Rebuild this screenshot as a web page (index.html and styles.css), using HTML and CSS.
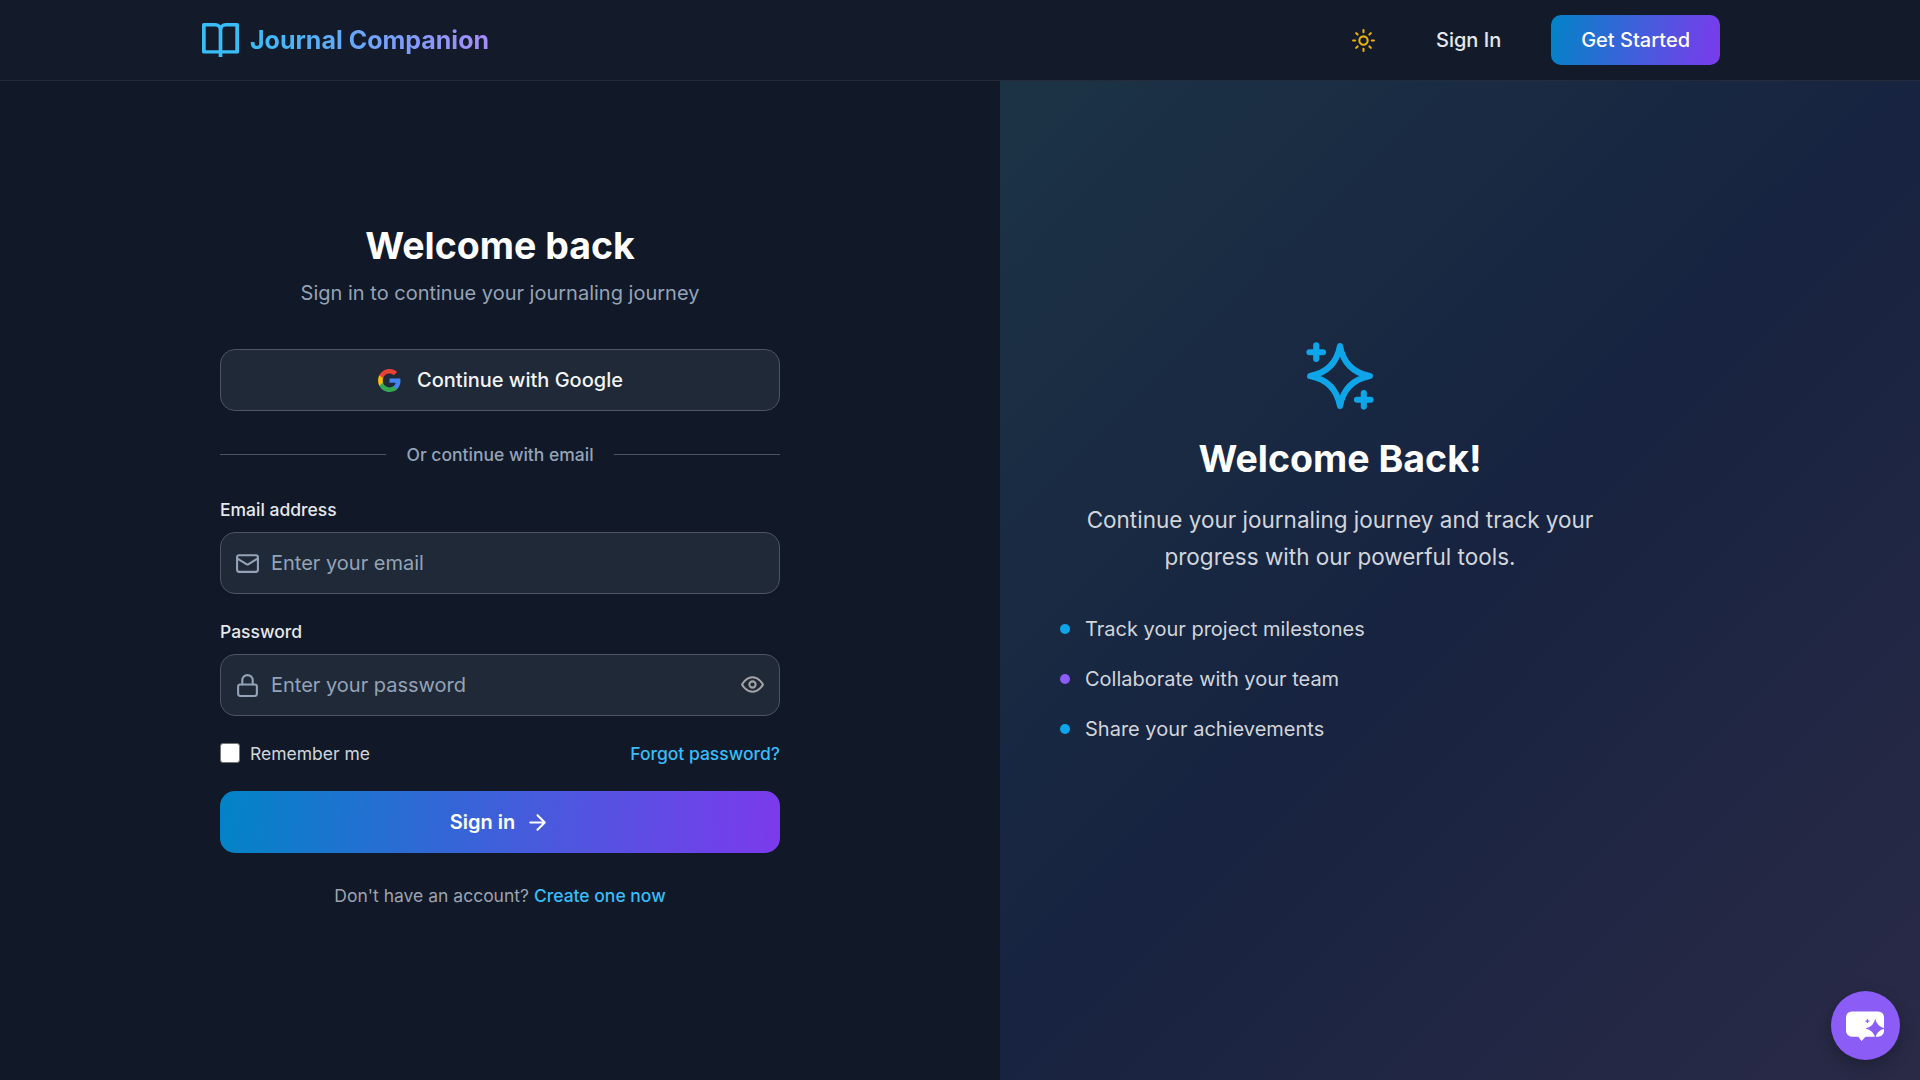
FILE: index.html
```html
<!DOCTYPE html>
<html lang="en">
<head>
    <meta charset="UTF-8">
    <meta name="viewport" content="width=device-width, initial-scale=1.0">
    <title>Sign In - Journal Companion</title>
    <link rel="stylesheet" href="styles.css">
</head>
<body>
    <header class="site-header">
        <div class="header-inner">
            <a class="brand" href="#">
                <svg class="brand-icon" viewBox="2 3 20 20" preserveAspectRatio="none" fill="#38bdf8"><path d="M13 21v2h-2v-2H3a1 1 0 0 1-1-1V4a1 1 0 0 1 1-1h6a3.99 3.99 0 0 1 3 1.354A3.99 3.99 0 0 1 15 3h6a1 1 0 0 1 1 1v16a1 1 0 0 1-1 1h-8zm7-2V5h-5a2 2 0 0 0-2 2v12h7zm-9 0V7a2 2 0 0 0-2-2H4v14h7z"/></svg>
                <span class="brand-name">Journal Companion</span>
            </a>
            <nav class="header-nav">
                <svg class="sun-icon" viewBox="0 0 24 24" fill="none" stroke="#eab308" stroke-width="2" stroke-linecap="round" stroke-linejoin="round"><circle cx="12" cy="12" r="4"/><path d="M12 2v2M12 20v2M4.93 4.93l1.41 1.41M17.66 17.66l1.41 1.41M2 12h2M20 12h2M6.34 17.66l-1.41 1.41M19.07 4.93l-1.41 1.41"/></svg>
                <a class="nav-link" href="#">Sign In</a>
                <a class="nav-cta" href="#">Get Started</a>
            </nav>
        </div>
    </header>

    <main class="auth-page">
        <section class="form-panel">
            <div class="form-box">
                <h1>Welcome back</h1>
                <p class="subheading">Sign in to continue your journaling journey</p>

                <button class="google-button" type="button">
                    <svg class="google-icon" viewBox="0 0 24 24">
                        <path fill="#4285F4" d="M22.56 12.25c0-.78-.07-1.53-.2-2.25H12v4.26h5.92c-.26 1.37-1.04 2.53-2.21 3.31v2.77h3.57c2.08-1.92 3.28-4.74 3.28-8.09z"/>
                        <path fill="#34A853" d="M12 23c2.97 0 5.46-.98 7.28-2.66l-3.57-2.77c-.98.66-2.23 1.06-3.71 1.06-2.86 0-5.29-1.93-6.16-4.53H2.18v2.84C3.99 20.53 7.7 23 12 23z"/>
                        <path fill="#FBBC05" d="M5.84 14.09c-.22-.66-.35-1.36-.35-2.09s.13-1.43.35-2.09V7.07H2.18C1.43 8.55 1 10.22 1 12s.43 3.45 1.18 4.93l2.85-2.22.81-.62z"/>
                        <path fill="#EA4335" d="M12 5.38c1.62 0 3.06.56 4.21 1.64l3.15-3.15C17.45 2.09 14.97 1 12 1 7.7 1 3.99 3.47 2.18 7.07l3.66 2.84c.87-2.6 3.3-4.53 6.16-4.53z"/>
                    </svg>
                    Continue with Google
                </button>

                <div class="divider"><span>Or continue with email</span></div>

                <form>
                    <label class="field-label" for="email">Email address</label>
                    <div class="input-wrap">
                        <svg class="field-icon" viewBox="0 0 24 24"><rect x="2" y="4" width="20" height="16" rx="2"/><path d="m22 7-8.97 5.7a1.94 1.94 0 0 1-2.06 0L2 7"/></svg>
                        <input id="email" type="email" placeholder="Enter your email">
                    </div>

                    <label class="field-label password-label" for="password">Password</label>
                    <div class="input-wrap">
                        <svg class="field-icon" viewBox="0 0 24 24"><rect x="3" y="11" width="18" height="11" rx="2"/><path d="M7 11V7a5 5 0 0 1 10 0v4"/></svg>
                        <input id="password" type="password" placeholder="Enter your password">
                        <svg class="field-icon eye-icon" viewBox="0 0 24 24"><path d="M2 12s3.5-7 10-7 10 7 10 7-3.5 7-10 7-10-7-10-7Z"/><circle cx="12" cy="12" r="3"/></svg>
                    </div>

                    <div class="form-options">
                        <label class="remember"><span class="checkbox"></span>Remember me</label>
                        <a class="link" href="#">Forgot password?</a>
                    </div>

                    <button class="submit-button" type="button">
                        Sign in
                        <svg class="arrow-icon" viewBox="0 0 24 24"><path d="M5 12h14M12 5l7 7-7 7"/></svg>
                    </button>
                </form>

                <p class="signup-note">Don't have an account? <a class="link" href="#">Create one now</a></p>
            </div>
        </section>

        <section class="promo-panel">
            <div class="promo-box">
                <svg class="sparkle-icon" viewBox="0 0 200 200" fill="none" stroke="#0ea5e9" stroke-width="18" stroke-linecap="round" stroke-linejoin="round">
                    <path d="M100 12Q114 86 188 100Q114 114 100 188Q86 114 12 100Q86 86 100 12Z"/>
                    <path d="M30 10v40M10 30h40M170 150v40M150 170h40"/>
                </svg>
                <h2>Welcome Back!</h2>
                <p class="promo-text">Continue your journaling journey and track your progress with our powerful tools.</p>
                <ul class="promo-list">
                    <li><span class="dot dot-blue"></span>Track your project milestones</li>
                    <li><span class="dot dot-purple"></span>Collaborate with your team</li>
                    <li><span class="dot dot-blue"></span>Share your achievements</li>
                </ul>
            </div>
        </section>
    </main>

    <!-- Floating assistant button -->
    <button class="chat-button" type="button" aria-label="Open assistant">
        <svg viewBox="0 0 40 32" width="39" height="32">
            <path fill="#fff" d="M6 1h27a6 6 0 0 1 6 6v14a6 6 0 0 1-6 6H20l-4 4.5-3.500-4.500H6a6 6 0 0 1-6-6V7a6 6 0 0 1 6-6z"/>
            <path fill="#8b5cf6" d="M30 8.500Q31.500 16.500 40 18.500Q31.500 20.500 30 28.500Q28.500 20.500 20 18.500Q28.500 16.500 30 8.500Z"/>
            <path stroke="#8b5cf6" stroke-width="1.300" d="M22 9v4M20 11h4"/>
        </svg>
    </button>
</body>
</html>
```

FILE: styles.css
```css
* {
    box-sizing: border-box;
}

html,
body {
    height: 100%;
}

body {
    margin: 0;
    overflow: hidden;
    background-color: #111827;
    color: #fff;
    font-family: 'Inter', 'Liberation Sans', sans-serif;
    font-size: 20px;
    line-height: 30px;
}

a {
    text-decoration: none;
}

/* Header */
.site-header {
    height: 81px;
    background-color: #131b2b;
    border-bottom: 1px solid #242c3b;
}

.header-inner {
    display: flex;
    align-items: center;
    justify-content: space-between;
    width: 1536px;
    height: 80px;
    margin: 0 auto;
    padding: 0 8px;
}

.brand {
    display: flex;
    align-items: center;
    gap: 11px;
    margin-left: 2px;
}

.brand-icon {
    width: 37px;
    height: 34px;
}

.brand-name {
    font-size: 25px;
    font-weight: 700;
    line-height: 35px;
    background: linear-gradient(90deg, #38bdf8, #a78bfa);
    -webkit-background-clip: text;
    background-clip: text;
    color: transparent;
}

.header-nav {
    display: flex;
    align-items: center;
}

.sun-icon {
    width: 25px;
    height: 25px;
    margin-right: 60px;
}

.nav-link {
    margin-right: 50px;
    color: #e5e7eb;
    font-weight: 500;
}

.nav-cta {
    padding: 10px 30px;
    border-radius: 10px;
    background: linear-gradient(100deg, #0284c7, #7c3aed);
    color: #fff;
    font-weight: 500;
}

/* Page split */
.auth-page {
    display: flex;
    height: 999px;
}

.form-panel {
    width: 1000px;
    padding-top: 142px;
    background-color: #111827;
}

.form-box {
    width: 560px;
    margin: 0 auto;
    text-align: center;
}

h1,
h2 {
    margin: 0;
    font-size: 37.5px;
    font-weight: 700;
    line-height: 45px;
}

.subheading {
    margin: 10px 0 41px;
    color: #94a3b8;
}

/* Google button */
.google-button {
    display: flex;
    align-items: center;
    justify-content: center;
    gap: 15px;
    width: 100%;
    height: 62px;
    background-color: #1f2937;
    border: 1px solid #4b5563;
    border-radius: 15px;
    color: #f3f4f6;
    font: 500 20px/30px 'Inter', sans-serif;
}

.google-icon {
    width: 25px;
    height: 25px;
}

/* Divider */
.divider {
    display: flex;
    align-items: center;
    gap: 20px;
    margin: 31px 0 30px;
    color: #94a3b8;
    font-size: 17.5px;
    font-weight: 500;
    line-height: 25px;
}

.divider::before,
.divider::after {
    content: "";
    flex: 1;
    height: 1px;
    background-color: #4b5563;
}

/* Fields */
form {
    text-align: left;
}

.field-label {
    display: block;
    margin-bottom: 10px;
    color: #e5e7eb;
    font-size: 17.5px;
    font-weight: 500;
    line-height: 25px;
}

.password-label {
    margin-top: 25px;
}

.input-wrap {
    display: flex;
    align-items: center;
    height: 62px;
    padding: 0 14px;
    background-color: #1f2937;
    border: 1px solid #4b5563;
    border-radius: 15px;
}

.input-wrap input {
    flex: 1;
    min-width: 0;
    margin-left: 11px;
    padding: 0;
    border: none;
    outline: none;
    background: none;
    color: #fff;
    font: 400 20px/30px 'Inter', sans-serif;
}

.input-wrap input::placeholder {
    color: #94a3b8;
}

.field-icon {
    flex: none;
    width: 25px;
    height: 25px;
    fill: none;
    stroke: #94a3b8;
    stroke-width: 2;
    stroke-linecap: round;
    stroke-linejoin: round;
}

.eye-icon {
    margin-bottom: 2px;
    stroke: #a3a3a3;
}

/* Remember me row */
.form-options {
    display: flex;
    align-items: center;
    justify-content: space-between;
    margin-top: 25px;
    font-size: 17.5px;
    line-height: 25px;
}

.remember {
    display: flex;
    align-items: center;
    gap: 10px;
    color: #d1d5db;
}

.checkbox {
    width: 20px;
    height: 20px;
    margin-bottom: 2px;
    background-color: #fff;
    border: 1px solid #767676;
    border-radius: 3px;
}

.link {
    color: #38bdf8;
    font-weight: 500;
}

/* Sign in button */
.submit-button {
    display: flex;
    align-items: center;
    justify-content: center;
    gap: 10px;
    width: 100%;
    height: 62px;
    margin-top: 25px;
    border: none;
    border-radius: 15px;
    background: linear-gradient(95deg, #0284c7, #7c3aed);
    color: #fff;
    font: 600 20px/30px 'Inter', sans-serif;
}

.arrow-icon {
    width: 25px;
    height: 25px;
    fill: none;
    stroke: #fff;
    stroke-width: 2;
    stroke-linecap: round;
    stroke-linejoin: round;
}

.signup-note {
    margin: 30px 0 0;
    color: #9ca3af;
    font-size: 17.5px;
    line-height: 25px;
}

/* Right panel */
.promo-panel {
    flex: 1;
    padding: 261px 0 0 60px;
    background: linear-gradient(135deg, #1c3345 0%, #172340 50%, #2a2a47 100%);
}

.promo-box {
    width: 560px;
    text-align: center;
}

.sparkle-icon {
    display: block;
    width: 68px;
    height: 68px;
    margin: 0 auto;
}

h2 {
    margin-top: 26px;
}

.promo-text {
    margin: 20px 0 0;
    color: #d1d5db;
    font-size: 22.500px;
    line-height: 37px;
}

.promo-list {
    margin: 39px 0 0;
    padding: 0;
    list-style: none;
    color: #d1d5db;
    text-align: left;
}

.promo-list li {
    display: flex;
    align-items: center;
    gap: 15px;
    height: 30px;
    margin-bottom: 20px;
}

.dot {
    width: 10px;
    height: 10px;
    border-radius: 50%;
}

.dot-blue {
    background-color: #0ea5e9;
}

.dot-purple {
    background-color: #8b5cf6;
}

/* Floating chat button */
.chat-button {
    position: fixed;
    right: 20px;
    bottom: 20px;
    display: flex;
    align-items: center;
    justify-content: center;
    width: 69px;
    height: 69px;
    padding: 0;
    border: none;
    border-radius: 50%;
    background-color: #8b5cf6;
    box-shadow: 0 6px 16px rgba(0, 0, 0, 0.25);
}
```
